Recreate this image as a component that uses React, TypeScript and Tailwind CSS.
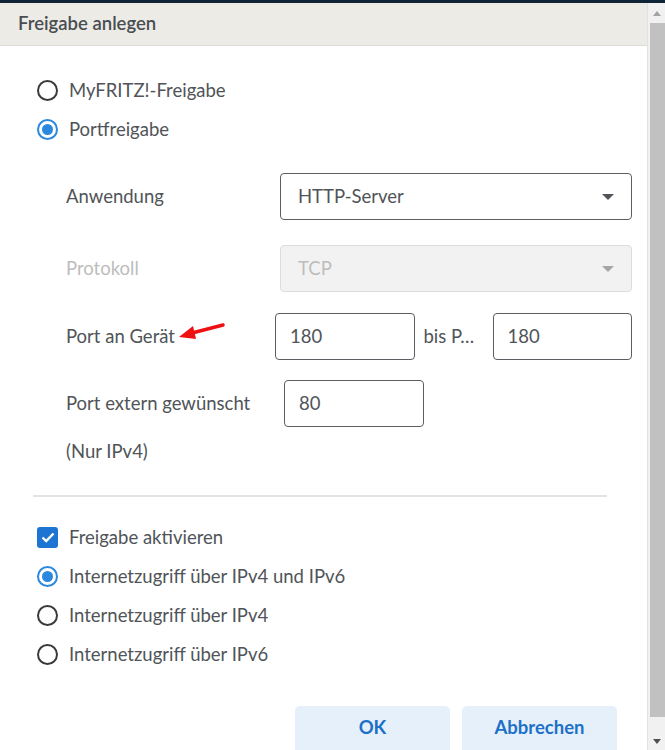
import React from "react";

const FONT = { fontFamily: "Lato, 'Noto Sans', sans-serif" };

function Radio({ checked, label }: { checked?: boolean; label: string }) {
  return (
    <div className="flex h-[39px] items-center gap-[11px]">
      <span
        className={
          checked
            ? "flex size-[21px] items-center justify-center rounded-full border-2 border-[#2a88de]"
            : "flex size-[21px] items-center justify-center rounded-full border-2 border-[#3a3a3a]"
        }
      >
        {checked ? <span className="size-[11px] rounded-full bg-[#2a88de]" /> : null}
      </span>
      <span className="text-[18.5px] text-[#505458]">{label}</span>
    </div>
  );
}

function Caret({ muted }: { muted?: boolean }) {
  return (
    <svg width="12" height="6" viewBox="0 0 12 6" aria-hidden>
      <path d="M0 0h12L6 6z" fill={muted ? "#a6a6a6" : "#505458"} />
    </svg>
  );
}

function Field({ value, className }: { value: string; className: string }) {
  return (
    <div
      className={
        "flex h-[47px] items-center rounded-[4px] border border-[#5b5e62] px-[14px] text-[18.5px] text-[#505458] " +
        className
      }
    >
      {value}
    </div>
  );
}

export default function App() {
  return (
    <div className="flex h-[750px] w-[665px] flex-col overflow-hidden bg-white" style={FONT}>
      <div className="h-[3px] shrink-0 bg-[#0f2537]" />
      <div className="flex min-h-0 flex-1">
        <div className="flex min-w-0 flex-1 flex-col border-r border-[#e2e2e2]">
          <div className="flex h-[43px] shrink-0 items-center border-b border-[#dcdcd8] bg-[#ecebe5] pl-[18px]">
            <span className="text-[18.5px] font-semibold text-[#4a4e53]">Freigabe anlegen</span>
          </div>

          <div className="flex flex-col pl-[37px] pt-[25px]">
            <Radio label="MyFRITZ!-Freigabe" />
            <Radio checked label="Portfreigabe" />
          </div>

          <div className="flex flex-col pl-[66px] pr-[15px] pt-[24px] text-[18.5px] text-[#505458]">
            <div className="flex h-[47px] items-center">
              <span className="w-[214px] shrink-0">Anwendung</span>
              <div className="flex h-[47px] flex-1 items-center justify-between rounded-[4px] border border-[#5b5e62] pl-[17px] pr-[17px]">
                <span>HTTP-Server</span>
                <Caret />
              </div>
            </div>

            <div className="mt-[25px] flex h-[47px] items-center">
              <span className="w-[214px] shrink-0 text-[#bdbdbd]">Protokoll</span>
              <div className="flex h-[47px] flex-1 items-center justify-between rounded-[4px] border border-[#dcdcdc] bg-[#f2f2f2] pl-[17px] pr-[17px] text-[#bdbdbd]">
                <span>TCP</span>
                <Caret muted />
              </div>
            </div>

            <div className="mt-[21px] flex h-[47px] items-center">
              <span className="relative w-[209px] shrink-0">
                Port an Gerät
                <svg
                  className="absolute left-[112px] top-[-2px]"
                  width="50"
                  height="22"
                  viewBox="0 0 50 22"
                  aria-hidden
                >
                  <path d="M45 4 L14 12" stroke="#ee1111" strokeWidth="3.5" strokeLinecap="round" />
                  <path d="M1 16 L15 5 L18 18 Z" fill="#ee1111" />
                </svg>
              </span>
              <Field value="180" className="w-[140px]" />
              <span className="w-[78px] shrink-0 pl-[9px]">bis P…</span>
              <Field value="180" className="w-[140px]" />
            </div>

            <div className="mt-[20px] flex h-[47px] items-center">
              <span className="w-[218px] shrink-0">Port extern gewünscht</span>
              <Field value="80" className="w-[140px]" />
            </div>

            <div className="flex h-[50px] items-center">(Nur IPv4)</div>
          </div>

          <div className="ml-[33px] mr-[40px] mt-[18px] h-[2px] bg-[#e3e3e3]" />

          <div className="flex flex-col pl-[37px] pt-[21px]">
            <div className="flex h-[39px] items-center gap-[11px]">
              <span className="flex size-[21px] items-center justify-center rounded-[3px] bg-[#1e74d2]">
                <svg width="14" height="11" viewBox="0 0 14 11" aria-hidden>
                  <path d="M1.5 5.5 L5.2 9 L12.5 1.5" stroke="#fff" strokeWidth="2.4" fill="none" />
                </svg>
              </span>
              <span className="text-[18.5px] text-[#505458]">Freigabe aktivieren</span>
            </div>
            <Radio checked label="Internetzugriff über IPv4 und IPv6" />
            <Radio label="Internetzugriff über IPv4" />
            <Radio label="Internetzugriff über IPv6" />
          </div>

          <div className="mt-auto flex justify-end gap-[12px] pr-[30px]">
            <button
              type="button"
              className="h-[44px] w-[155px] rounded-t-[5px] bg-[#e5f0fa] text-[18.5px] font-bold text-[#1d70c8]"
            >
              OK
            </button>
            <button
              type="button"
              className="h-[44px] w-[155px] rounded-t-[5px] bg-[#e5f0fa] text-[18.5px] font-bold text-[#1d70c8]"
            >
              Abbrechen
            </button>
          </div>
        </div>

        <div className="flex w-[17px] shrink-0 flex-col bg-[#f1f1f1]">
          <div className="flex h-[20px] items-center justify-center">
            <svg width="8" height="5" viewBox="0 0 8 5" aria-hidden>
              <path d="M0 5h8L4 0z" fill="#a3a3a3" />
            </svg>
          </div>
          <div className="ml-[2px] flex-1 bg-[#c1c1c1]" />
          <div className="h-[16px]" />
          <div className="flex h-[17px] items-center justify-center">
            <svg width="8" height="5" viewBox="0 0 8 5" aria-hidden>
              <path d="M0 0h8L4 5z" fill="#505050" />
            </svg>
          </div>
        </div>
      </div>
    </div>
  );
}
